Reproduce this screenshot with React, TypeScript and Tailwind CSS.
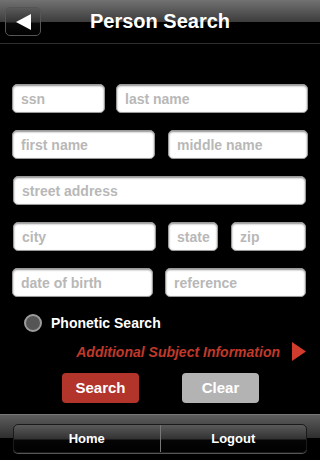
import React from 'react';

function Field({ placeholder, className }: { placeholder: string; className: string }) {
  return (
    <div
      className={`flex h-[29px] items-center rounded-[5px] border border-[#9a9a9a] bg-white pl-[8px] shadow-[inset_0_1px_2px_rgba(0,0,0,0.45)] ${className}`}
    >
      <span className="text-[14px] font-bold leading-none text-[#b8b8b8]">{placeholder}</span>
    </div>
  );
}

export default function App() {
  return (
    <div
      className="flex h-[460px] w-[320px] flex-col overflow-hidden bg-black text-white"
      style={{ fontFamily: '"Liberation Sans", Arial, sans-serif' }}
    >
      {/* nav bar */}
      <header className="relative h-[44px] shrink-0 border-b border-[#2e2e2e] bg-[linear-gradient(to_bottom,#727272_0px,#3c3c3c_22px,#000_22px,#000_43px)]">
        <div className="absolute left-[5px] top-[7px] flex h-[29px] w-[36px] items-center justify-center rounded-[5px] border border-[#555] bg-[linear-gradient(to_bottom,#5a5a5a_0px,#333_14px,#0a0a0a_15px,#000_29px)]">
          <svg width="15" height="16" viewBox="0 0 15 16">
            <polygon points="0,8 15,0 15,16" fill="#fff" />
          </svg>
        </div>
        <h1 className="pt-[9px] text-center text-[20px] font-bold leading-[24px] text-white">Person Search</h1>
      </header>

      {/* form */}
      <main className="flex flex-1 flex-col pt-[40px]">
        <div className="flex flex-col gap-[17px] px-[12px]">
          <div className="flex gap-[11px]">
            <Field placeholder="ssn" className="w-[93px]" />
            <Field placeholder="last name" className="w-[192px]" />
          </div>
          <div className="flex gap-[13px]">
            <Field placeholder="first name" className="w-[143px]" />
            <Field placeholder="middle name" className="w-[140px]" />
          </div>
          <div className="flex pl-[1px]">
            <Field placeholder="street address" className="w-[293px]" />
          </div>
          <div className="flex gap-[12px] pl-[1px]">
            <Field placeholder="city" className="w-[143px]" />
            <Field placeholder="state" className="w-[50px]" />
            <Field placeholder="zip" className="ml-[1px] w-[75px]" />
          </div>
          <div className="flex gap-[12px]">
            <Field placeholder="date of birth" className="w-[141px]" />
            <Field placeholder="reference" className="w-[141px]" />
          </div>
        </div>

        <div className="mt-[17px] flex items-center gap-[9px] pl-[24px]">
          <div className="h-[18px] w-[18px] rounded-full border-2 border-[#9c9c9c] bg-[#555]" />
          <span className="text-[14px] font-bold leading-none">Phonetic Search</span>
        </div>

        <div className="mt-[10px] flex items-center justify-end gap-[12px] pr-[14px]">
          <span className="text-[14px] font-bold italic leading-none text-[#c0392b]">Additional Subject Information</span>
          <svg width="14" height="19" viewBox="0 0 14 19">
            <polygon points="0,0 14,9.5 0,19" fill="#d23c2c" />
          </svg>
        </div>

        <div className="mt-[12px] flex gap-[43px] pl-[62px]">
          <button className="h-[30px] w-[77px] rounded-[4px] bg-[#b2342a] text-[15px] font-bold text-white">Search</button>
          <button className="h-[30px] w-[77px] rounded-[4px] bg-[#b3b3b3] text-[15px] font-bold text-white">Clear</button>
        </div>
      </main>

      {/* bottom toolbar */}
      <footer className="flex h-[46px] shrink-0 items-start border-t border-[#777] bg-[linear-gradient(to_bottom,#5e5e5e_0px,#2e2e2e_23px,#000_23px,#000_46px)] px-[13px] pt-[9px]">
        <div className="flex h-[29px] w-full overflow-hidden rounded-[5px] border border-[#1a1a1a] bg-[linear-gradient(to_bottom,#5a5a5a_0px,#323232_14px,#050505_15px,#000_29px)] shadow-[0_1px_0_#555]">
          <div className="flex flex-1 items-center justify-center border-r border-[#777] text-[13px] font-bold">Home</div>
          <div className="flex flex-1 items-center justify-center text-[13px] font-bold">Logout</div>
        </div>
      </footer>
    </div>
  );
}
